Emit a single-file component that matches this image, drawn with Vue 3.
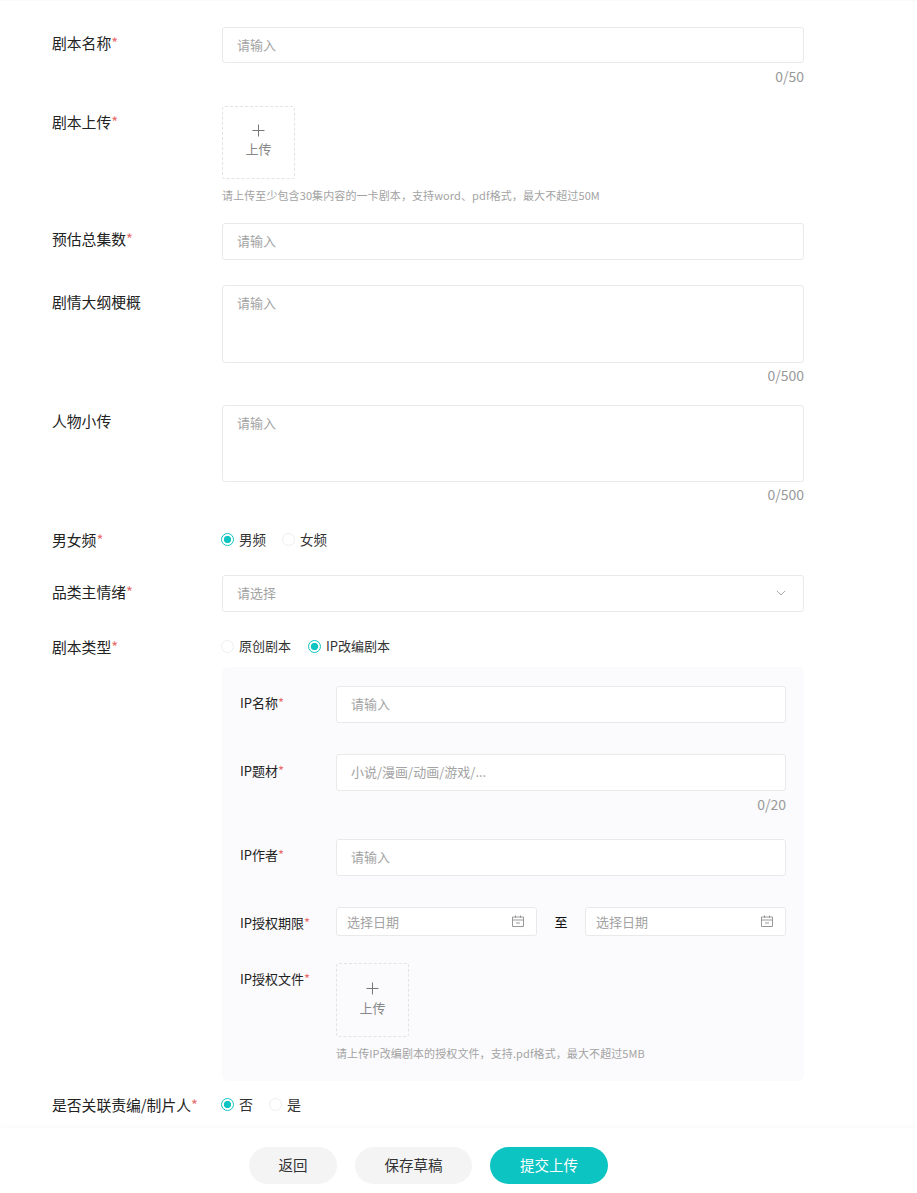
<script setup>
const calPath = 'M1.5 3h11v9.5h-11zM1.5 6h11M4.5 1.5V4M9.5 1.5V4M5 9h4'
</script>

<template>
  <div class="page">
    <main class="form">
      <section class="row r1">
        <label class="label">剧本名称<i>*</i></label>
        <div class="ctl">
          <div class="input first">请输入</div>
          <div class="count">0/50</div>
        </div>
      </section>

      <section class="row r2">
        <label class="label">剧本上传<i>*</i></label>
        <div class="ctl">
          <div class="upload">
            <svg width="13" height="13" viewBox="0 0 13 13"><path d="M6.5 0.5v12M0.5 6.5h12" stroke="#777" fill="none" /></svg>
            <span>上传</span>
          </div>
          <p class="hint">请上传至少包含30集内容的一卡剧本，支持word、pdf格式，最大不超过50M</p>
        </div>
      </section>

      <section class="row r3">
        <label class="label">预估总集数<i>*</i></label>
        <div class="ctl"><div class="input">请输入</div></div>
      </section>

      <section class="row r4">
        <label class="label">剧情大纲梗概</label>
        <div class="ctl">
          <div class="input area">请输入</div>
          <div class="count tight">0/500</div>
        </div>
      </section>

      <section class="row r5">
        <label class="label">人物小传</label>
        <div class="ctl">
          <div class="input area a2">请输入</div>
          <div class="count tight">0/500</div>
        </div>
      </section>

      <section class="row r6">
        <label class="label">男女频<i>*</i></label>
        <div class="radios">
          <span class="radio on"><b></b>男频</span>
          <span class="radio"><b></b>女频</span>
        </div>
      </section>

      <section class="row r7">
        <label class="label">品类主情绪<i>*</i></label>
        <div class="ctl">
          <div class="input select">
            请选择
            <svg width="10" height="6" viewBox="0 0 10 6"><path d="M0.8 0.8L5 5L9.2 0.8" stroke="#aaa" fill="none" /></svg>
          </div>
        </div>
      </section>

      <section class="row r8">
        <label class="label">剧本类型<i>*</i></label>
        <div class="ctl">
          <div class="radios kind">
            <span class="radio"><b></b>原创剧本</span>
            <span class="radio on"><b></b>IP改编剧本</span>
          </div>
          <div class="panel">
            <div class="sub s1">
              <label class="label">IP名称<i>*</i></label>
              <div class="ctl"><div class="input">请输入</div></div>
            </div>
            <div class="sub s2">
              <label class="label">IP题材<i>*</i></label>
              <div class="ctl">
                <div class="input">小说/漫画/动画/游戏/...</div>
                <div class="count">0/20</div>
              </div>
            </div>
            <div class="sub s3">
              <label class="label">IP作者<i>*</i></label>
              <div class="ctl"><div class="input">请输入</div></div>
            </div>
            <div class="sub s4">
              <label class="label">IP授权期限<i>*</i></label>
              <div class="dates">
                <div class="date">
                  选择日期
                  <svg width="14" height="14" viewBox="0 0 14 14"><path :d="calPath" stroke="#999" fill="none" /></svg>
                </div>
                <span class="to">至</span>
                <div class="date">
                  选择日期
                  <svg width="14" height="14" viewBox="0 0 14 14"><path :d="calPath" stroke="#999" fill="none" /></svg>
                </div>
              </div>
            </div>
            <div class="sub s5">
              <label class="label">IP授权文件<i>*</i></label>
              <div class="ctl">
                <div class="upload tall">
                  <svg width="13" height="13" viewBox="0 0 13 13"><path d="M6.5 0.5v12M0.5 6.5h12" stroke="#777" fill="none" /></svg>
                  <span>上传</span>
                </div>
                <p class="hint">请上传IP改编剧本的授权文件，支持.pdf格式，最大不超过5MB</p>
              </div>
            </div>
          </div>
        </div>
      </section>

      <section class="row r9">
        <label class="label">是否关联责编/制片人<i>*</i></label>
        <div class="radios yn">
          <span class="radio on"><b></b>否</span>
          <span class="radio"><b></b>是</span>
        </div>
      </section>
    </main>

    <footer class="foot">
      <button class="btn b1">返回</button>
      <button class="btn b2">保存草稿</button>
      <button class="btn primary">提交上传</button>
    </footer>
  </div>
</template>

<style>
html, body { margin: 0; background: #fff; }
</style>

<style scoped>
.page {
  position: relative;
  height: 1193px;
  overflow: hidden;
  box-sizing: border-box;
  border-top: 1px solid #fafafa;
  font-family: "Noto Sans CJK SC", "Noto Sans", sans-serif;
  font-size: 14px;
  color: #222;
  display: flex;
  flex-direction: column;
}
.form { flex: 1; padding: 26px 113px 0 52px; }
.row { display: flex; }
.label { width: 170px; flex: none; line-height: 20px; padding-top: 6px; font-size: 14.8px; color: #222; }
.label i { color: #e96a6a; font-style: normal; }
.ctl { flex: 1; min-width: 0; }
.input {
  box-sizing: border-box;
  height: 37px;
  border: 1px solid #e9e9e9;
  border-radius: 3px;
  background: #fff;
  padding: 0 14px;
  line-height: 34px;
  color: #a3a3a3;
  font-size: 13px;
}
.first { height: 36px; }
.area { height: 78px; line-height: 20px; padding-top: 7px; }
.a2 { height: 77px; padding-top: 7px; }
.count { text-align: right; color: #999; line-height: 20px; margin-top: 3px; }
.tight { margin-top: 2px; }
.upload {
  box-sizing: border-box;
  width: 73px;
  height: 73px;
  border: 1px dashed #e3e3e3;
  border-radius: 3px;
  display: flex;
  flex-direction: column;
  align-items: center;
  padding-top: 17px;
  color: #888;
  font-size: 13px;
}
.upload span { line-height: 20px; margin-top: 2px; }
.tall { height: 74px; padding-top: 18px; }
.tall span { margin-top: 3px; }
.hint { margin: 8px 0 0; font-size: 11px; letter-spacing: 0.1px; line-height: 16px; color: #a3a3a3; }
.radios { display: flex; gap: 17px; align-items: center; height: 20px; font-size: 13px; }
.kind { gap: 18px; }
.radio { display: flex; align-items: center; color: #333; line-height: 20px; margin-left: -1px; }
.radio b {
  box-sizing: border-box;
  width: 13px;
  height: 13px;
  border: 1px solid #eee;
  border-radius: 50%;
  background: #fff;
  margin-right: 5px;
}
.radio.on b {
  border-color: #0fc5c2;
  background: radial-gradient(circle, #0fc5c2 0 3.4px, #fff 3.9px);
}
.r1 { margin-bottom: 20px; }
.r2 { margin-bottom: 20px; }
.r3 { margin-bottom: 25px; }
.r4 { margin-bottom: 20px; }
.r4 .label { padding-top: 7px; }
.r5 { margin-bottom: 25px; }
.r6 { margin-bottom: 26px; height: 20px; }
.r6 .radios { font-size: 13.5px; }
.r6 .label, .r8 > .label, .r9 .label { padding-top: 1px; }
.r7 { margin-bottom: 24px; }
.r7 .label { padding-top: 7px; }
.select { display: flex; align-items: center; justify-content: space-between; padding-right: 17px; padding-bottom: 1px; }
.panel {
  box-sizing: border-box;
  margin-top: 11px;
  height: 414px;
  background: #fbfbfd;
  border-radius: 6px;
  padding: 19px 18px 0;
}
.sub { display: flex; }
.sub .label { width: 96px; font-size: 13px; }
.s1 { margin-bottom: 31px; }
.s2 { margin-bottom: 25px; }
.s3 { margin-bottom: 31px; }
.s4 { margin-bottom: 27px; }
.s1 .label, .s2 .label { padding-top: 7px; }
.s3 .label, .s4 .label, .s5 .label { padding-top: 6px; }
.dates { flex: 1; display: flex; align-items: center; }
.date {
  box-sizing: border-box;
  flex: 1;
  height: 29px;
  border: 1px solid #e9e9e9;
  border-radius: 3px;
  background: #fff;
  display: flex;
  align-items: center;
  justify-content: space-between;
  padding: 0 11px 1px 10px;
  color: #a3a3a3;
  font-size: 13px;
}
.to { width: 48px; text-align: center; flex: none; color: #111; font-size: 13px; }
.r9 { margin-top: 13px; }
.yn { font-size: 14px; }
.foot {
  flex: none;
  height: 65px;
  box-sizing: border-box;
  padding: 19px 0 0 249px;
  background: #fff;
  box-shadow: 0 -2px 6px rgba(0, 0, 0, 0.025);
  display: flex;
  gap: 18px;
  align-items: flex-start;
}
.btn {
  height: 37px;
  border: 0;
  border-radius: 19px;
  background: #f4f4f5;
  color: #333;
  font: inherit;
  font-size: 14.5px;
  padding: 0 0 2px;
}
.b1 { width: 88px; }
.b2 { width: 117px; }
.primary { width: 118px; background: #0cc4c2; color: #fff; }
</style>
